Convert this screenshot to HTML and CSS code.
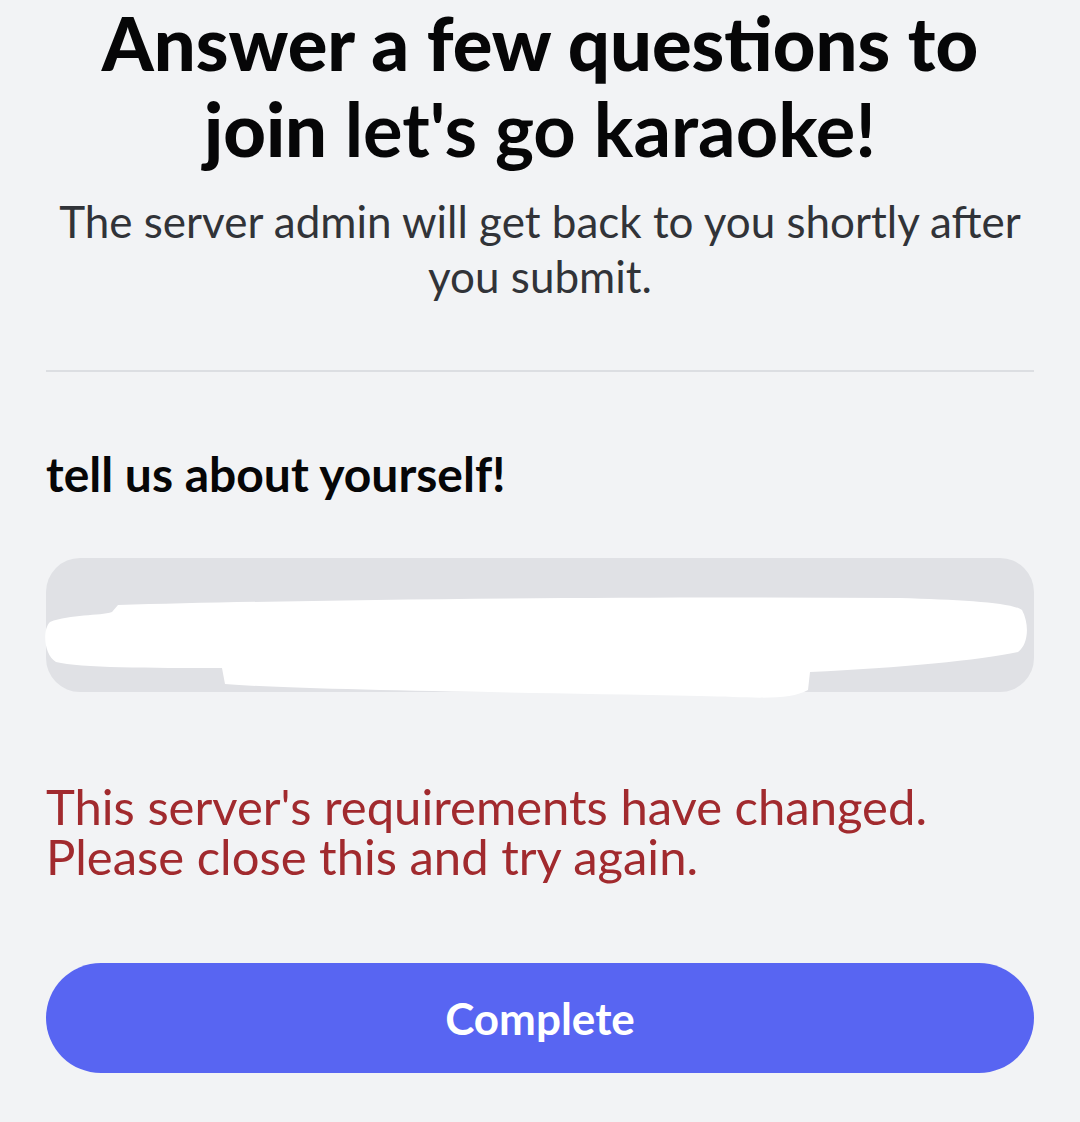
FILE: index.html
```html
<!DOCTYPE html>
<html lang="en">
<head>
    <meta charset="UTF-8">
    <meta name="viewport" content="width=device-width, initial-scale=1.0">
    <title>Member application</title>
    <link rel="stylesheet" href="styles.css">
</head>
<body>
    <div class="page">
        <h1 class="title">Answer a few questions to join <span class="server-name">let's go karaoke!</span></h1>
        <p class="subtitle">The server admin will get back to you shortly after you submit.</p>

        <hr class="divider">

        <div class="question">
            <label class="question-label" for="about">tell us about yourself!</label>
            <div class="answer-box">
                <!-- answer hidden behind a white marker scribble -->
                <svg class="scribble" viewBox="46 558 988 134" width="988" height="134">
                    <path fill="#ffffff" d="M 50 622 C 70 614, 100 616, 112 612 L 118 605 C 300 600, 600 596, 900 598 C 960 600, 1010 602, 1022 610 C 1030 625, 1028 645, 1018 652 C 980 660, 900 668, 810 672 L 808 690 C 790 700, 760 698, 700 696 C 500 692, 300 690, 225 684 L 222 668 C 150 668, 80 668, 56 662 C 44 655, 42 630, 50 622 Z"/>
                </svg>
            </div>
        </div>

        <p class="error">This server's requirements have changed. Please close this and try again.</p>

        <button class="complete-btn">Complete</button>
    </div>
</body>
</html>
```

FILE: styles.css
```css
body {
    margin: 0;
    background: #f2f3f5;
    font-family: Lato, "Noto Sans", sans-serif;
    color: #060607;
}
.page {
    padding: 0 46px;
}
.title {
    margin: 0;
    font-size: 74px;
    line-height: 86px;
    font-weight: 900;
    text-align: center;
}
.server-name {
    font-weight: 700;
}
.subtitle {
    margin: 22px 0 0;
    font-size: 44px;
    line-height: 55px;
    color: #313338;
    text-align: center;
}
.divider {
    margin: 66px 0 0;
    border: none;
    height: 2px;
    background: #dcdee2;
}
.question {
    margin-top: 74px;
}
.question-label {
    display: block;
    font-size: 48px;
    line-height: 56px;
    font-weight: 700;
}
.answer-box {
    position: relative;
    margin-top: 56px;
    height: 134px;
    background: #e0e1e5;
    border-radius: 34px;
}
.scribble {
    position: absolute;
    left: 0;
    top: 0;
    overflow: visible;
}
.error {
    margin: 89px 0 0;
    font-size: 49px;
    line-height: 50px;
    color: #a12a2e;
}
.complete-btn {
    display: block;
    width: 100%;
    height: 110px;
    margin-top: 82px;
    border: none;
    border-radius: 55px;
    background: #5865f2;
    color: #ffffff;
    font-family: Lato, "Noto Sans", sans-serif;
    font-size: 44px;
    font-weight: 700;
    cursor: pointer;
}
```
